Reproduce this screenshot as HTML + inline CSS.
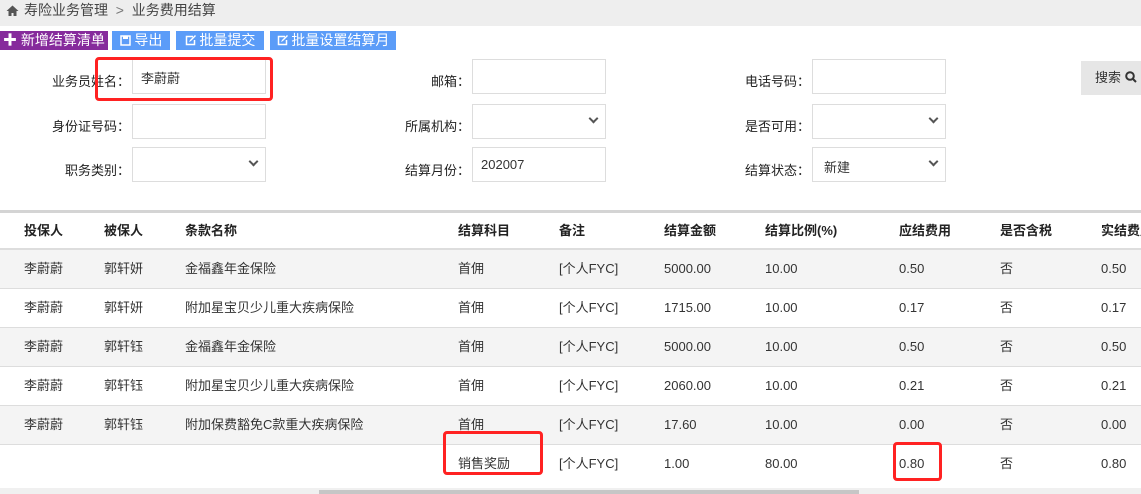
<!DOCTYPE html>
<html><head><meta charset="utf-8">
<style>
*{margin:0;padding:0;box-sizing:border-box}
body{width:1141px;height:494px;overflow:hidden;background:#fff;font-family:"Liberation Sans","Noto Sans CJK SC",sans-serif;font-size:13px;color:#333;position:relative}
.a{position:absolute}
.bc{left:0;top:0;width:1141px;height:26px;background:#eee;font-size:14px;color:#444;line-height:20px;padding-left:6px}
.btn{top:31px;height:19px;color:#fff;font-size:14px;line-height:19px;text-align:center;white-space:nowrap}
.blue{background:#5b9cf8}
.lbl{font-size:13px;color:#222;text-align:right;white-space:nowrap}
.inp{border:1px solid #ddd;background:#fff;height:35px;width:134px;font-size:13px;color:#333;padding:8px 0 0 8px}
.chev{position:absolute;right:8px;top:10px;width:7px;height:7px;border-right:2px solid #555;border-bottom:2px solid #555;transform:rotate(45deg)}
.row{left:0;width:1141px;height:39px;border-bottom:1px solid #ddd}
.c{position:absolute;top:0;line-height:38px;white-space:nowrap;color:#333}
.h .c{font-weight:bold;color:#222}
.red{border:3px solid #f22;border-radius:4px}
</style></head><body>
<div class="a bc"><svg width="13" height="11" viewBox="0 0 13 11" style="vertical-align:-1px;margin-right:5px"><path d="M6.5 0.5L0.5 6h2v5h3V8h2v3h3V6h2z" fill="#555"/></svg>寿险业务管理 &nbsp;<span style="color:#777">&gt;</span>&nbsp; 业务费用结算</div>

<div class="a btn" style="left:0;width:108px;background:#862b9c">✚ 新增结算清单</div>
<div class="a btn blue" style="left:112px;width:58px"><svg width="11" height="11" viewBox="0 0 11 11" style="vertical-align:-1px"><rect x="1" y="1" width="9" height="9" fill="none" stroke="#fff" stroke-width="1.5"/><rect x="3" y="1" width="5" height="3" fill="#fff"/></svg> 导出</div>
<div class="a btn blue" style="left:176px;width:88px"><svg width="11" height="11" viewBox="0 0 11 11" style="vertical-align:-1px"><path d="M8 1.5H1.5v8h8V5" fill="none" stroke="#fff" stroke-width="1.5"/><path d="M4 7l1-2 5-5 1 1-5 5z" fill="#fff"/></svg> 批量提交</div>
<div class="a btn blue" style="left:270px;width:126px"><svg width="11" height="11" viewBox="0 0 11 11" style="vertical-align:-1px"><path d="M8 1.5H1.5v8h8V5" fill="none" stroke="#fff" stroke-width="1.5"/><path d="M4 7l1-2 5-5 1 1-5 5z" fill="#fff"/></svg> 批量设置结算月</div>

<div class="a lbl" style="right:1011px;top:71px">业务员姓名：</div>
<div class="a inp" style="left:132px;top:59px">李蔚蔚</div>
<div class="a lbl" style="right:671px;top:71px">邮箱：</div>
<div class="a inp" style="left:472px;top:59px"></div>
<div class="a lbl" style="right:331px;top:71px">电话号码：</div>
<div class="a inp" style="left:812px;top:59px"></div>
<div class="a" style="left:1081px;top:61px;width:60px;height:34px;background:#e6e6e6;font-size:13px;line-height:34px;padding-left:14px;color:#333">搜索 <svg width="12" height="12" viewBox="0 0 12 12" style="vertical-align:-1px"><circle cx="5" cy="5" r="3.8" fill="none" stroke="#333" stroke-width="2"/><path d="M8 8l3 3" stroke="#333" stroke-width="2"/></svg></div>
<div class="a lbl" style="right:1011px;top:116px">身份证号码：</div>
<div class="a inp" style="left:132px;top:104px"></div>
<div class="a lbl" style="right:671px;top:116px">所属机构：</div>
<div class="a inp" style="left:472px;top:104px"><span class="chev"></span></div>
<div class="a lbl" style="right:331px;top:116px">是否可用：</div>
<div class="a inp" style="left:812px;top:104px"><span class="chev"></span></div>
<div class="a lbl" style="right:1011px;top:160px">职务类别：</div>
<div class="a inp" style="left:132px;top:147px"><span class="chev"></span></div>
<div class="a lbl" style="right:671px;top:160px">结算月份：</div>
<div class="a inp" style="left:472px;top:147px;padding-top:9px">202007</div>
<div class="a lbl" style="right:331px;top:160px">结算状态：</div>
<div class="a inp" style="left:812px;top:147px;padding-left:11px;padding-top:9px">新建<span class="chev"></span></div>

<div class="a" style="left:0;top:210px;width:1141px;height:3px;background:#d4d4d4"></div>

<div class="a row h" style="top:213px;height:37px;border-bottom:2px solid #ddd">
<span class="c" style="left:24px;line-height:36px">投保人</span><span class="c" style="left:104px;line-height:36px">被保人</span><span class="c" style="left:185px;line-height:36px">条款名称</span><span class="c" style="left:458px;line-height:36px">结算科目</span><span class="c" style="left:559px;line-height:36px">备注</span><span class="c" style="left:664px;line-height:36px">结算金额</span><span class="c" style="left:765px;line-height:36px">结算比例(%)</span><span class="c" style="left:899px;line-height:36px">应结费用</span><span class="c" style="left:1000px;line-height:36px">是否含税</span><span class="c" style="left:1101px;line-height:36px">实结费用</span></div>

<div class="a row" style="top:250px;background:#f4f4f4"><span class="c" style="left:24px">李蔚蔚</span><span class="c" style="left:104px">郭轩妍</span><span class="c" style="left:185px">金福鑫年金保险</span><span class="c" style="left:458px">首佣</span><span class="c" style="left:559px">[个人FYC]</span><span class="c" style="left:664px">5000.00</span><span class="c" style="left:765px">10.00</span><span class="c" style="left:899px">0.50</span><span class="c" style="left:1000px">否</span><span class="c" style="left:1101px">0.50</span></div>
<div class="a row" style="top:289px"><span class="c" style="left:24px">李蔚蔚</span><span class="c" style="left:104px">郭轩妍</span><span class="c" style="left:185px">附加星宝贝少儿重大疾病保险</span><span class="c" style="left:458px">首佣</span><span class="c" style="left:559px">[个人FYC]</span><span class="c" style="left:664px">1715.00</span><span class="c" style="left:765px">10.00</span><span class="c" style="left:899px">0.17</span><span class="c" style="left:1000px">否</span><span class="c" style="left:1101px">0.17</span></div>
<div class="a row" style="top:328px;background:#f4f4f4"><span class="c" style="left:24px">李蔚蔚</span><span class="c" style="left:104px">郭轩钰</span><span class="c" style="left:185px">金福鑫年金保险</span><span class="c" style="left:458px">首佣</span><span class="c" style="left:559px">[个人FYC]</span><span class="c" style="left:664px">5000.00</span><span class="c" style="left:765px">10.00</span><span class="c" style="left:899px">0.50</span><span class="c" style="left:1000px">否</span><span class="c" style="left:1101px">0.50</span></div>
<div class="a row" style="top:367px"><span class="c" style="left:24px">李蔚蔚</span><span class="c" style="left:104px">郭轩钰</span><span class="c" style="left:185px">附加星宝贝少儿重大疾病保险</span><span class="c" style="left:458px">首佣</span><span class="c" style="left:559px">[个人FYC]</span><span class="c" style="left:664px">2060.00</span><span class="c" style="left:765px">10.00</span><span class="c" style="left:899px">0.21</span><span class="c" style="left:1000px">否</span><span class="c" style="left:1101px">0.21</span></div>
<div class="a row" style="top:406px;background:#f4f4f4"><span class="c" style="left:24px">李蔚蔚</span><span class="c" style="left:104px">郭轩钰</span><span class="c" style="left:185px">附加保费豁免C款重大疾病保险</span><span class="c" style="left:458px">首佣</span><span class="c" style="left:559px">[个人FYC]</span><span class="c" style="left:664px">17.60</span><span class="c" style="left:765px">10.00</span><span class="c" style="left:899px">0.00</span><span class="c" style="left:1000px">否</span><span class="c" style="left:1101px">0.00</span></div>
<div class="a row" style="top:445px;border-bottom:none"><span class="c" style="left:458px">销售奖励</span><span class="c" style="left:559px">[个人FYC]</span><span class="c" style="left:664px">1.00</span><span class="c" style="left:765px">80.00</span><span class="c" style="left:899px">0.80</span><span class="c" style="left:1000px">否</span><span class="c" style="left:1101px">0.80</span></div>

<div class="a" style="left:0;top:488px;width:1141px;height:6px;background:#f0f0f0"></div>
<div class="a" style="left:319px;top:490px;width:540px;height:4px;background:#c6c6c6"></div>

<div class="a red" style="left:95px;top:57px;width:178px;height:44px"></div>
<div class="a red" style="left:443px;top:431px;width:100px;height:44px"></div>
<div class="a red" style="left:893px;top:442px;width:49px;height:39px"></div>
</body></html>
